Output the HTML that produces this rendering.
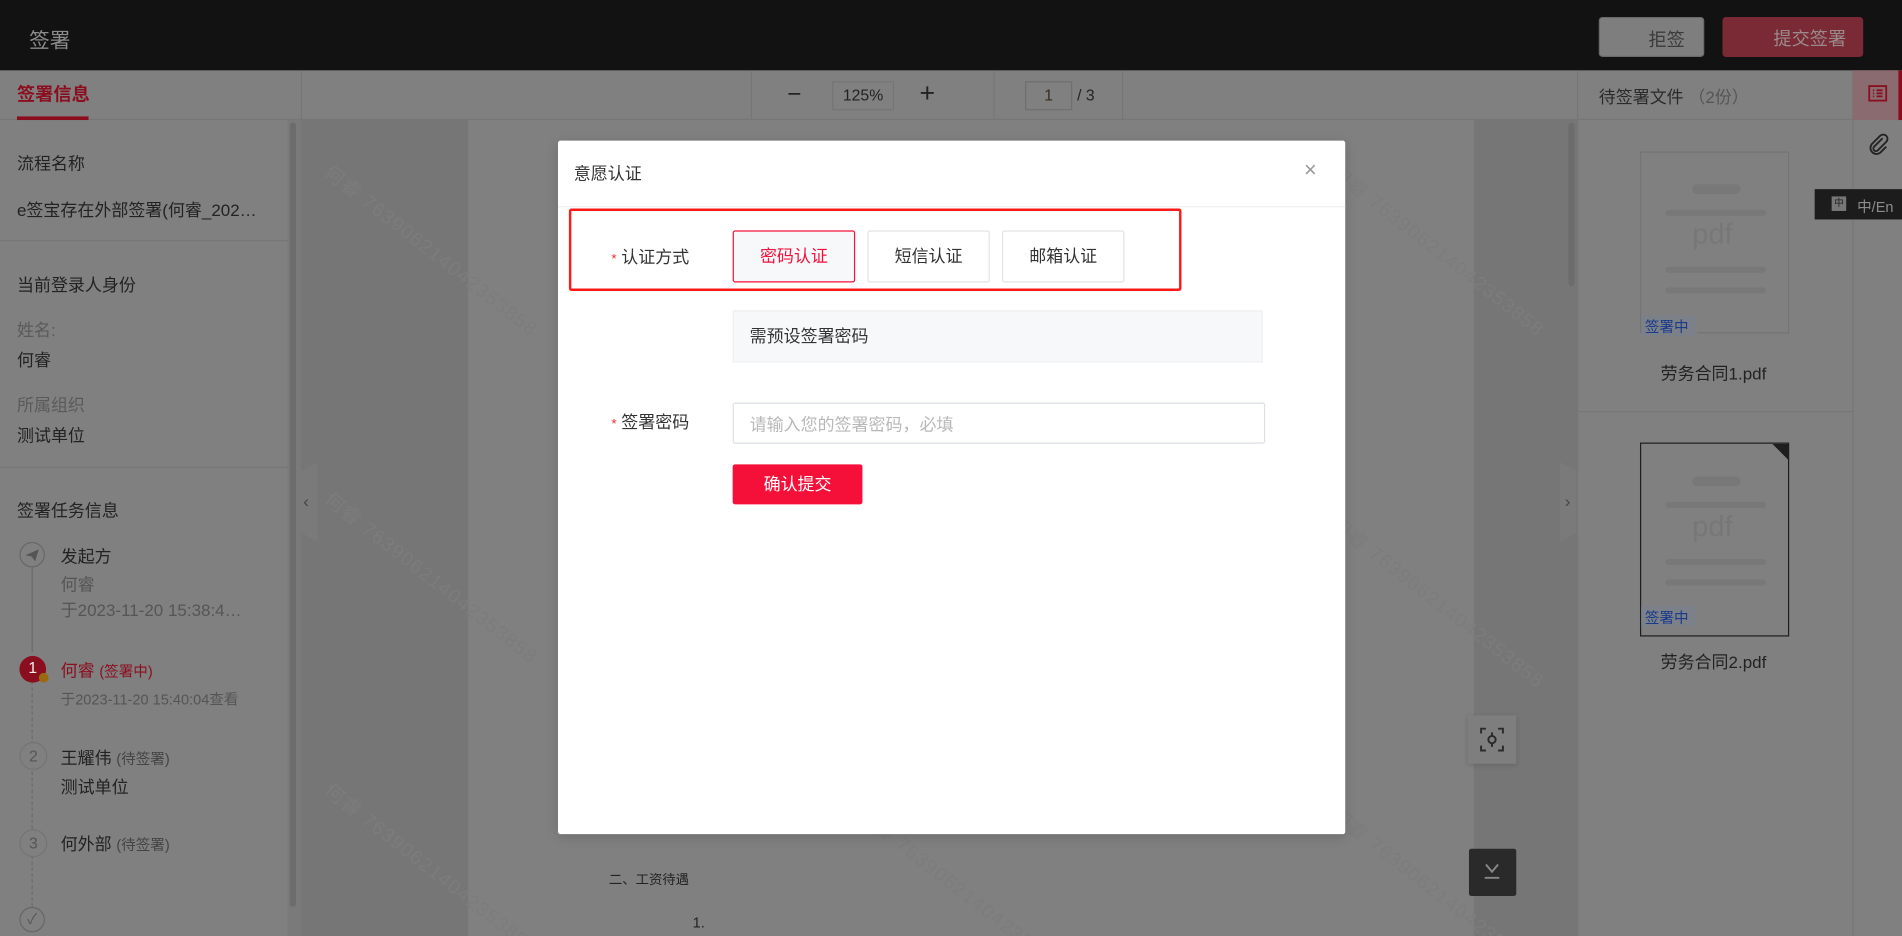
<!DOCTYPE html>
<html><head><meta charset="utf-8"><style>
*{margin:0;padding:0;box-sizing:border-box}
html,body{width:1902px;height:936px;overflow:hidden;background:#808080}
body{font-family:"Liberation Sans","Noto Sans CJK SC",sans-serif;}
#s{position:absolute;left:0;top:0;width:1568px;height:772px;transform:scale(1.21301,1.21244);transform-origin:0 0;background:#808080;overflow:hidden}
.a{position:absolute;white-space:nowrap}
.t{font-size:14px;color:#222}
.g{color:#4a4a4a}
.wm{position:absolute;font-size:16px;color:#7c7c7c;transform:rotate(38deg);transform-origin:0 0;white-space:nowrap;letter-spacing:1px}
</style></head><body><div id="s">
<!-- top bar -->
<div class="a" style="left:0;top:0;width:1568px;height:58px;background:#121212"></div>
<div class="a" style="left:24px;top:19px;font-size:17px;color:#8c8c8c">签署</div>
<div class="a" style="left:1318px;top:14px;width:87px;height:33px;background:#7e7e7e;border:1px solid #6a6a6a;border-radius:3px;font-size:15px;color:#3a3a3a;padding:7px 0 0 40px">拒签</div>
<div class="a" style="left:1420px;top:14px;width:116px;height:33px;background:#7a2a35;border-radius:3px;font-size:15px;color:#9a8a8c;padding:7px 0 0 42px">提交签署</div>
<!-- second row -->
<div class="a" style="left:0;top:98px;width:1527px;height:1px;background:#767676"></div>
<div class="a" style="left:14px;top:67px;font-size:15px;font-weight:bold;color:#8b0e1f">签署信息</div>
<div class="a" style="left:14px;top:96px;width:59px;height:3px;background:#8b0e1f"></div>
<div class="a" style="left:248px;top:58px;width:1px;height:41px;background:#767676"></div>
<div class="a" style="left:619px;top:58px;width:1px;height:41px;background:#767676"></div>
<div class="a" style="left:819px;top:58px;width:1px;height:41px;background:#767676"></div>
<div class="a" style="left:925px;top:58px;width:1px;height:41px;background:#767676"></div>
<div class="a" style="left:649px;top:67px;font-size:20px;color:#222">−</div>
<div class="a" style="left:686px;top:67px;width:51px;height:24px;border:1px solid #757575;font-size:13px;color:#222;text-align:center;line-height:22px">125%</div>
<div class="a" style="left:758px;top:64px;font-size:22px;color:#222">+</div>
<div class="a" style="left:845px;top:67px;width:39px;height:24px;border:1px solid #6f6f6f;font-size:13px;color:#3a2a20;text-align:center;line-height:22px">1</div>
<div class="a" style="left:888px;top:71px;font-size:13px;color:#222">/ 3</div>
<!-- left panel -->
<div class="a" style="left:237px;top:99px;width:11px;height:673px;background:#7a7a7a"></div>
<div class="a" style="left:239px;top:101px;width:5px;height:647px;background:#6c6c6c;border-radius:3px"></div>
<div class="a t" style="left:14px;top:125px">流程名称</div>
<div class="a t" style="left:14px;top:163px">e签宝存在外部签署(何睿_202…</div>
<div class="a" style="left:0;top:198px;width:237px;height:1px;background:#767676"></div>
<div class="a t" style="left:14px;top:225px">当前登录人身份</div>
<div class="a t g" style="left:14px;top:262px;color:#5a5a5a">姓名:</div>
<div class="a t" style="left:14px;top:287px">何睿</div>
<div class="a t" style="left:14px;top:324px;color:#5a5a5a">所属组织</div>
<div class="a t" style="left:14px;top:349px">测试单位</div>
<div class="a" style="left:0;top:385px;width:237px;height:1px;background:#767676"></div>
<div class="a t" style="left:14px;top:411px">签署任务信息</div>
<div class="a" style="left:26px;top:468px;width:1px;height:70px;background:#6a6a6a"></div>
<div class="a" style="left:26px;top:562px;width:0;height:186px;border-left:1px dashed #6a6a6a"></div>
<div class="a" style="left:16px;top:447px;width:21px;height:21px;border:1px solid #666;border-radius:50%;background:#808080"></div>
<svg class="a" style="left:20px;top:452px" width="13" height="12" viewBox="0 0 13 12"><path d="M1 6 L12 1 L9 11 L6 7 Z" fill="#555"/></svg>
<div class="a t" style="left:50px;top:449px">发起方</div>
<div class="a t" style="left:50px;top:472px;color:#555">何睿</div>
<div class="a t" style="left:50px;top:493px;color:#555">于2023-11-20 15:38:4…</div>
<div class="a" style="left:16px;top:541px;width:22px;height:22px;border-radius:50%;background:#8b0e1f;color:#eee;font-size:13px;text-align:center;line-height:20px">1</div>
<div class="a" style="left:32px;top:555px;width:8px;height:8px;border-radius:50%;background:#9a6a10"></div>
<div class="a" style="left:50px;top:543px;font-size:14px;color:#8b0e1f">何睿 <span style="font-size:12px">(签署中)</span></div>
<div class="a" style="left:50px;top:568px;font-size:12px;color:#555">于2023-11-20 15:40:04查看</div>
<div class="a" style="left:16px;top:612px;width:23px;height:23px;border:1px solid #747474;border-radius:50%;background:#808080;color:#555;font-size:13px;text-align:center;line-height:21px">2</div>
<div class="a t" style="left:50px;top:615px">王耀伟 <span style="font-size:12px;color:#444">(待签署)</span></div>
<div class="a t" style="left:50px;top:639px">测试单位</div>
<div class="a" style="left:16px;top:684px;width:23px;height:23px;border:1px solid #747474;border-radius:50%;background:#808080;color:#555;font-size:13px;text-align:center;line-height:21px">3</div>
<div class="a t" style="left:50px;top:686px">何外部 <span style="font-size:12px;color:#444">(待签署)</span></div>
<div class="a" style="left:16px;top:748px;width:21px;height:21px;border:1px solid #666;border-radius:50%;background:#808080;color:#555;font-size:12px;text-align:center;line-height:19px">✓</div>
<!-- doc area -->
<div class="a" style="left:248px;top:99px;width:1052px;height:673px;background:#767676;overflow:hidden">
  <div class="a" style="left:138px;top:0;width:829px;height:673px;background:#808080"></div>
  <div class="a" style="left:1045px;top:2px;width:5px;height:135px;background:#6c6c6c;border-radius:3px"></div>
  <div class="a" style="left:0;top:282px;width:14px;height:66px;background:#7a7a7a;clip-path:polygon(0 12%,100% 0,100% 100%,0 88%)"></div>
  <div class="a" style="left:2px;top:306px;font-size:14px;color:#444">‹</div>
  <div class="a" style="left:1038px;top:282px;width:14px;height:66px;background:#7a7a7a;clip-path:polygon(0 0,100% 12%,100% 88%,0 100%)"></div>
  <div class="a" style="left:1042px;top:306px;font-size:14px;color:#444">›</div>
  <div class="wm" style="left:30px;top:30px">何睿 763906214042353858</div>
  <div class="wm" style="left:470px;top:30px">何睿 763906214042353858</div>
  <div class="wm" style="left:860px;top:30px">何睿 763906214042353858</div>
  <div class="wm" style="left:30px;top:300px">何睿 763906214042353858</div>
  <div class="wm" style="left:860px;top:320px">何睿 763906214042353858</div>
  <div class="wm" style="left:30px;top:540px">何睿 763906214042353858</div>
  <div class="wm" style="left:470px;top:560px">何睿 763906214042353858</div>
  <div class="wm" style="left:860px;top:560px">何睿 763906214042353858</div>
  <div class="a" style="left:254px;top:618px;font-size:11px;color:#222">二、工资待遇</div>
  <div class="a" style="left:323px;top:655px;font-size:12px;color:#222">1.</div>
  <div class="a" style="left:962px;top:491px;width:40px;height:40px;background:#7e7e7e;box-shadow:0 1px 4px rgba(0,0,0,.15)"></div>
  <svg class="a" style="left:972px;top:501px" width="20" height="20" viewBox="0 0 20 20" fill="none" stroke="#2a2a2a" stroke-width="1.6"><path d="M1 5V1h4M15 1h4v4M19 15v4h-4M5 19H1v-4"/><circle cx="10" cy="10" r="3"/><path d="M10 4v3M10 13v3"/></svg>
  <div class="a" style="left:963px;top:601px;width:39px;height:39px;background:#2a2a2a;border-radius:2px"></div>
  <svg class="a" style="left:975px;top:612px" width="14" height="16" viewBox="0 0 14 16" fill="none" stroke="#888" stroke-width="1.6"><path d="M2 2l5 6 5-6M1 13h12"/></svg>
</div>
<!-- right panel -->
<div class="a" style="left:1300px;top:58px;width:1px;height:714px;background:#767676"></div>
<div class="a t" style="left:1318px;top:70px;color:#2a2a2a">待签署文件 <span style="color:#555">（2份）</span></div>
<div class="a" style="left:1300px;top:339px;width:227px;height:1px;background:#767676"></div>
<div class="a" style="left:1352px;top:125px;width:123px;height:150px;border:1px solid #747474"></div>
<div class="a" style="left:1395px;top:152px;width:40px;height:8px;border-radius:4px;background:#787878"></div>
<div class="a" style="left:1373px;top:173px;width:83px;height:5px;border-radius:3px;background:#787878"></div>
<div class="a" style="left:1395px;top:180px;font-size:24px;color:#777">pdf</div>
<div class="a" style="left:1373px;top:220px;width:83px;height:5px;border-radius:3px;background:#787878"></div>
<div class="a" style="left:1373px;top:237px;width:83px;height:5px;border-radius:3px;background:#787878"></div>
<div class="a" style="left:1353px;top:260px;width:46px;height:17px;background:#7c8088;font-size:12px;color:#1a3a8a;padding:1px 3px">签署中</div>
<div class="a t" style="left:1369px;top:298px;color:#222">劳务合同1.pdf</div>
<div class="a" style="left:1352px;top:365px;width:123px;height:160px;border:1px solid #1e1e1e"></div>
<div class="a" style="left:1461px;top:366px;width:14px;height:14px;background:#1e1e1e;clip-path:polygon(0 0,100% 0,100% 100%)"></div>
<div class="a" style="left:1395px;top:393px;width:40px;height:8px;border-radius:4px;background:#787878"></div>
<div class="a" style="left:1373px;top:414px;width:83px;height:5px;border-radius:3px;background:#787878"></div>
<div class="a" style="left:1395px;top:421px;font-size:24px;color:#777">pdf</div>
<div class="a" style="left:1373px;top:461px;width:83px;height:5px;border-radius:3px;background:#787878"></div>
<div class="a" style="left:1373px;top:478px;width:83px;height:5px;border-radius:3px;background:#787878"></div>
<div class="a" style="left:1353px;top:500px;width:46px;height:17px;background:#7c8088;font-size:12px;color:#1a3a8a;padding:1px 3px">签署中</div>
<div class="a t" style="left:1369px;top:536px;color:#222">劳务合同2.pdf</div>
<!-- far right column -->
<div class="a" style="left:1527px;top:58px;width:1px;height:714px;background:#767676"></div>
<div class="a" style="left:1528px;top:58px;width:40px;height:41px;background:#8a6b70"></div>
<div class="a" style="left:1565px;top:58px;width:3px;height:41px;background:#8b0e1f"></div>
<svg class="a" style="left:1540px;top:70px" width="16" height="14" viewBox="0 0 16 14" fill="none" stroke="#8b0e1f" stroke-width="1.5"><rect x="1" y="1" width="14" height="12"/><path d="M4 4.5h1M7 4.5h5M4 7h1M7 7h5M4 9.5h1M7 9.5h5"/></svg>
<svg class="a" style="left:1540px;top:110px" width="17" height="18" viewBox="0 0 17 18" fill="none" stroke="#222" stroke-width="1.5"><path d="M12 4L5 11a2 2 0 0 0 3 3l7-7a3.5 3.5 0 0 0-5-5L3 9a5 5 0 0 0 7 7l5-5"/></svg>
<div class="a" style="left:1496px;top:156px;width:72px;height:25px;background:#1c1c1c"></div>
<div class="a" style="left:1510px;top:162px;width:12px;height:12px;background:#777;font-size:8px;color:#222;line-height:12px;text-align:center">中</div>
<div class="a" style="left:1531px;top:162px;font-size:12px;color:#8c8c8c">中/En</div>
<!-- modal -->
<div class="a" style="left:460px;top:116px;width:649px;height:572px;background:#fff;border-radius:2px;box-shadow:0 2px 10px rgba(0,0,0,.15)">
  <div class="a" style="left:13px;top:17px;font-size:14px;color:#333">意愿认证</div>
  <div class="a" style="left:615px;top:14px;font-size:18px;color:#999">×</div>
  <div class="a" style="left:0;top:54px;width:649px;height:1px;background:#eee"></div>
  <div class="a" style="left:9px;top:56px;width:505px;height:68px;border:2px solid #ff1a1a;border-radius:2px"></div>
  <div class="a" style="left:44px;top:86px;font-size:14px;color:#333"><span style="color:#f5222d;font-size:11px">*</span> 认证方式</div>
  <div class="a" style="left:144px;top:74px;width:101px;height:43px;border:1px solid #f5103a;border-radius:2px;background:#f7f8fa;font-size:14px;color:#f5103a;text-align:center;line-height:41px">密码认证</div>
  <div class="a" style="left:255px;top:74px;width:101px;height:43px;border:1px solid #e3e3e3;border-radius:2px;font-size:14px;color:#333;text-align:center;line-height:41px">短信认证</div>
  <div class="a" style="left:366px;top:74px;width:101px;height:43px;border:1px solid #e3e3e3;border-radius:2px;font-size:14px;color:#333;text-align:center;line-height:41px">邮箱认证</div>
  <div class="a" style="left:144px;top:140px;width:437px;height:43px;border:1px solid #eeeff1;background:#f7f8fa;font-size:14px;color:#333;padding-left:13px;line-height:41px">需预设签署密码</div>
  <div class="a" style="left:44px;top:222px;font-size:14px;color:#333"><span style="color:#f5222d;font-size:11px">*</span> 签署密码</div>
  <div class="a" style="left:144px;top:216px;width:439px;height:34px;border:1px solid #dcdfe6;border-radius:2px;font-size:14px;color:#b8b8b8;padding:7px 0 0 13px">请输入您的签署密码，必填</div>
  <div class="a" style="left:144px;top:267px;width:107px;height:33px;background:#f5103a;border-radius:2px;font-size:14px;color:#fff;text-align:center;line-height:33px">确认提交</div>
</div>
</div></body></html>
